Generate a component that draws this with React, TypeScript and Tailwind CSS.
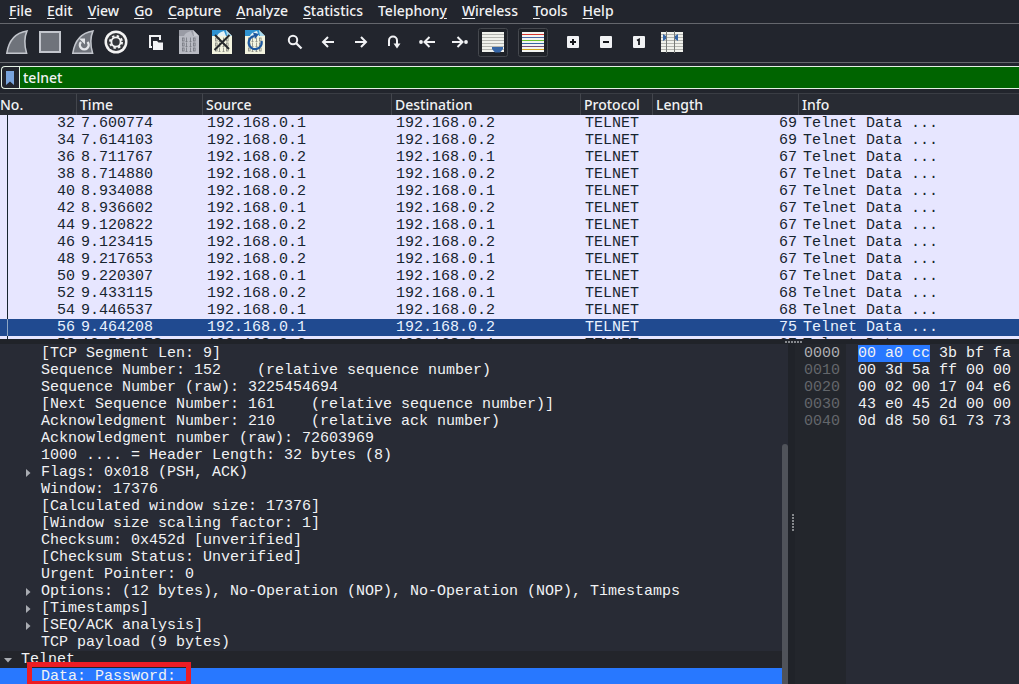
import type { ReactNode } from "react";

const menus: [string, string, string][] = [
  ["", "F", "ile"],
  ["", "E", "dit"],
  ["", "V", "iew"],
  ["", "G", "o"],
  ["", "C", "apture"],
  ["", "A", "nalyze"],
  ["", "S", "tatistics"],
  ["Telephon", "y", ""],
  ["", "W", "ireless"],
  ["", "T", "ools"],
  ["", "H", "elp"],
];

type Packet = [number, string, string, string, number];
const A = "192.168.0.1";
const B = "192.168.0.2";
const packets: Packet[] = [
  [32, "7.600774", A, B, 69],
  [34, "7.614103", A, B, 69],
  [36, "8.711767", B, A, 67],
  [38, "8.714880", A, B, 67],
  [40, "8.934088", B, A, 67],
  [42, "8.936602", A, B, 67],
  [44, "9.120822", B, A, 67],
  [46, "9.123415", A, B, 67],
  [48, "9.217653", B, A, 67],
  [50, "9.220307", A, B, 67],
  [52, "9.433115", B, A, 68],
  [54, "9.446537", A, B, 68],
  [56, "9.464208", A, B, 75],
  [58, "10.784878", B, A, 67],
];

type Detail = { text: string; expandable?: boolean };
const details: Detail[] = [
  { text: "[TCP Segment Len: 9]" },
  { text: "Sequence Number: 152    (relative sequence number)" },
  { text: "Sequence Number (raw): 3225454694" },
  { text: "[Next Sequence Number: 161    (relative sequence number)]" },
  { text: "Acknowledgment Number: 210    (relative ack number)" },
  { text: "Acknowledgment number (raw): 72603969" },
  { text: "1000 .... = Header Length: 32 bytes (8)" },
  { text: "Flags: 0x018 (PSH, ACK)", expandable: true },
  { text: "Window: 17376" },
  { text: "[Calculated window size: 17376]" },
  { text: "[Window size scaling factor: 1]" },
  { text: "Checksum: 0x452d [unverified]" },
  { text: "[Checksum Status: Unverified]" },
  { text: "Urgent Pointer: 0" },
  { text: "Options: (12 bytes), No-Operation (NOP), No-Operation (NOP), Timestamps", expandable: true },
  { text: "[Timestamps]", expandable: true },
  { text: "[SEQ/ACK analysis]", expandable: true },
  { text: "TCP payload (9 bytes)" },
];

const hexRows: [string, string, string][] = [
  ["0000", "00 a0 cc", " 3b bf fa"],
  ["0010", "", "00 3d 5a ff 00 00"],
  ["0020", "", "00 02 00 17 04 e6"],
  ["0030", "", "43 e0 45 2d 00 00"],
  ["0040", "", "0d d8 50 61 73 73"],
];

function Tool({ label, framed, children }: { label: string; framed?: boolean; children: ReactNode }) {
  return (
    <button type="button" aria-label={label} title={label} className="h-[33px] w-[33px] shrink-0">
      <svg viewBox="0 0 33 33" className="block h-[33px] w-[33px]" fill="none">
        {framed && <rect x="2.5" y="2.5" width="29" height="28" rx="2" fill="#1f2228" stroke="#45484e" />}
        {children}
      </svg>
    </button>
  );
}

function Fin() {
  return (
    <path d="M6.8 27.2C8.5 15.5 15 6.8 27 4.9C24.6 10.5 24.3 19.5 26.6 27.2Z" fill="#6f737b" stroke="#c3c6cd" strokeWidth="1.5" />
  );
}

function Digits({ color }: { color: string }) {
  return (
    <g stroke={color} strokeWidth="0.8">
      {[13.5, 18.5, 23.5].map((y) => (
        <g key={y}>
          <rect x="10.5" y={y - 1.5} width="1.6" height="3" />
          <path d={`M14.5 ${y - 2}v4M18.5 ${y - 2}v4M13.5 ${y + 2}h2M17.5 ${y + 2}h2`} />
          <rect x="21.5" y={y - 1.5} width="1.6" height="3" />
        </g>
      ))}
    </g>
  );
}

function Sheet({ gray }: { gray?: boolean }) {
  return (
    <>
      <path d="M7 4H21L27 10V28H7Z" fill={gray ? "#b9bbc3" : "#f3f4df"} />
      <path d="M7 4H21L23 10H7Z" fill={gray ? "#9a9ca5" : "#2f92d0"} />
      <path d="M12 10C13 7 16 6 19 5L21 10Z" fill={gray ? "#b9bbc3" : "#e4f2f5"} />
      <path d="M21 4L27 10H22Z" fill={gray ? "#c8cad0" : "#a7d8ee"} />
      <Digits color={gray ? "#74777f" : "#83857d"} />
    </>
  );
}

function Lines() {
  return (
    <>
      <rect x="6" y="6" width="22" height="20" fill="#f0f1ec" />
      <path d="M6 8.5h22M6 11.5h22M6 14.5h22M6 17.5h22M6 20.5h22M6 23.5h22" stroke="#b4b5b0" />
    </>
  );
}

function Toolbar() {
  const s = { stroke: "#f1f2f4", strokeWidth: 2 };
  return (
    <div role="toolbar" aria-label="Main toolbar" className="flex gap-[7px] border-b border-[#65676d] pt-0.5 pb-[3px]">
      <div className="flex">
        <Tool label="Start capturing packets"><Fin /></Tool>
        <Tool label="Stop capturing packets">
          <rect x="7" y="6" width="20" height="20" fill="#6f737b" stroke="#c3c6cd" strokeWidth="2" />
        </Tool>
        <Tool label="Restart current capture">
          <Fin />
          <path d="M15 16A4.400 4.400 0 1 0 21.500 16" stroke="#e4e6ea" strokeWidth="2.400" />
          <path d="M13 12.500H19V18.500Z" fill="#e4e6ea" />
        </Tool>
        <Tool label="Capture options">
          <circle cx="17" cy="16" r="11.500" fill="#f3f3f3" />
          <circle cx="17" cy="16" r="9" fill="#34363a" />
          <circle cx="17" cy="16" r="6" stroke="#f3f3f3" strokeWidth="2" strokeDasharray="2.356 2.356" />
          <circle cx="17" cy="16" r="4.600" stroke="#f3f3f3" strokeWidth="1.800" />
        </Tool>
      </div>
      <div className="flex">
        <Tool label="Open a capture file">
          <path d="M13 21H11V10H21V14" {...s} />
          <path d="M14 15H18L19.500 16.500H24V24H14Z" fill="#f1f2f4" />
        </Tool>
        <Tool label="Save this capture file"><Sheet gray /></Tool>
        <Tool label="Close this capture file">
          <Sheet />
          <path d="M10 9L24 23M24.500 9L9.500 24" stroke="#25282b" strokeWidth="2" />
        </Tool>
        <Tool label="Reload this file">
          <Sheet />
          <path d="M16 10.200A6.500 6.500 0 1 0 23.500 15" stroke="#1c579f" strokeWidth="2.200" />
          <path d="M15 6.500L21 8L17 13Z" fill="#1c579f" />
        </Tool>
      </div>
      <div className="flex">
        <Tool label="Find a packet">
          <circle cx="15" cy="14" r="4.200" {...s} />
          <path d="M18 17L23.500 22.500" stroke="#f1f2f4" strokeWidth="2.300" />
        </Tool>
        <Tool label="Previous packet"><path d="M17 11L12 16L17 21M12 16H23" {...s} /></Tool>
        <Tool label="Next packet"><path d="M17 11L22 16L17 21M22 16H11" {...s} /></Tool>
        <Tool label="Go to packet">
          <path d="M12 20V14.500A4 4 0 0 1 20 14.500V19" {...s} />
          <path d="M16.500 17.500H23.500L20 22.500Z" fill="#f1f2f4" />
        </Tool>
        <Tool label="First packet">
          <path d="M19.500 11L14.500 16L19.500 21M14.500 16H25" {...s} />
          <circle cx="11" cy="16" r="1.900" fill="#f1f2f4" />
        </Tool>
        <Tool label="Last packet">
          <path d="M14.500 11L19.500 16L14.500 21M19.500 16H9" {...s} />
          <circle cx="23" cy="16" r="1.900" fill="#f1f2f4" />
        </Tool>
        <Tool label="Auto scroll" framed>
          <Lines />
          <path d="M16 21H27V23L24 26.500H19L16 23Z" fill="#3565a6" />
        </Tool>
      </div>
      <div className="flex">
        <Tool label="Colorize packet list" framed>
          <rect x="6" y="6" width="22" height="20" fill="#f3f4f2" />
          <path d="M6 8.500h22" stroke="#d8362f" />
          <path d="M6 11.500h22" stroke="#4b66a5" />
          <path d="M6 14.500h22" stroke="#6cc32d" />
          <path d="M6 17.500h22" stroke="#3465a4" />
          <path d="M6 20.500h22" stroke="#75507b" />
          <path d="M6 23.500h22" stroke="#d2a41c" />
        </Tool>
      </div>
      <div className="flex">
        <Tool label="Zoom in">
          <rect x="11" y="10" width="12" height="12" rx="1" fill="#f1f2f4" />
          <path d="M14 16H20M17 13V19" stroke="#16181c" strokeWidth="2" />
        </Tool>
        <Tool label="Zoom out">
          <rect x="11" y="10" width="12" height="12" rx="1" fill="#f1f2f4" />
          <path d="M14 16H20" stroke="#16181c" strokeWidth="2" />
        </Tool>
        <Tool label="Normal size">
          <rect x="11" y="10" width="12" height="12" rx="1" fill="#f1f2f4" />
          <path d="M15 14.500L17 13.500V19" stroke="#16181c" strokeWidth="1.800" />
        </Tool>
        <Tool label="Resize columns">
          <Lines />
          <path d="M11.500 5V27M19.500 5V27" stroke="#777a78" />
          <path d="M8 8L11 10V13L8 15ZM23 8L20 10V13L23 15Z" fill="#3565a6" />
        </Tool>
      </div>
    </div>
  );
}

function PacketList() {
  const th = "h-[22px] border-l border-[#43464d] p-0 pl-[3px] text-left font-medium first:border-l-0 first:pl-0";
  return (
    <div className="h-[246px] shrink-0 overflow-hidden bg-[#e7e6ff]">
      <table className="w-full table-fixed border-separate border-spacing-0">
        <colgroup>
          <col className="w-[76px]" />
          <col className="w-[126px]" />
          <col className="w-[189px]" />
          <col className="w-[189px]" />
          <col className="w-[72px]" />
          <col className="w-[146px]" />
          <col />
        </colgroup>
        <thead className="bg-[#282b33] text-sm leading-[21px] text-[#f1f2f4]">
          <tr>
            {["No.", "Time", "Source", "Destination", "Protocol", "Length", "Info"].map((h) => (
              <th key={h} scope="col" className={`${th} border-t border-t-[#3a3d44]`}>{h}</th>
            ))}
          </tr>
        </thead>
        <tbody className="font-['Liberation_Mono',monospace] text-[15px] leading-[17px] whitespace-pre text-[#17242f]">
          {packets.map(([no, time, src, dst, len]) => (
            <tr key={no} className={no === 56 ? "bg-[#204a90] text-[#e9f2ff]" : ""}>
              <td className="p-0">
                <div className={`ml-[7px] h-[17px] border-l pr-px text-right ${no === 56 ? "border-[#8fa6c4]" : "border-[#17242f]"}`}>{no}</div>
              </td>
              <td className="p-0 pl-[5px]">{time}</td>
              <td className="p-0 pl-[5px]">{src}</td>
              <td className="p-0 pl-[5px]">{dst}</td>
              <td className="p-0 pl-[5px]">TELNET</td>
              <td className="p-0 pr-px text-right">{len}</td>
              <td className="p-0 pl-[5px]">Telnet Data ...</td>
            </tr>
          ))}
        </tbody>
      </table>
    </div>
  );
}

function Grip({ vertical }: { vertical?: boolean }) {
  return (
    <div className={vertical ? "flex flex-col gap-px" : "flex gap-px"}>
      {[0, 1, 2, 3, 4, 5].map((i) => (
        <span key={i} className="h-0.5 w-0.5 bg-[#85888c]" />
      ))}
    </div>
  );
}

function Arrow({ open }: { open?: boolean }) {
  return (
    <svg viewBox="0 0 8 8" className="h-2 w-2 shrink-0" fill="#a9acb2">
      <path d={open ? "M0 2H8L4 6.500Z" : "M2 0L6.500 4L2 8Z"} />
    </svg>
  );
}

function Details() {
  return (
    <section aria-label="Packet details" className="flex min-w-0 flex-1 overflow-hidden">
      <ul role="tree" className="min-w-0 flex-1 pt-px">
        {details.map((d) => (
          <li key={d.text} role="treeitem" className="flex h-[17px] items-center whitespace-pre">
            <span className="flex w-[41px] shrink-0 justify-end pr-[9px]">{d.expandable && <Arrow />}</span>
            {d.text}
          </li>
        ))}
        <li role="treeitem" aria-expanded="true" className="flex h-[17px] items-center bg-[#23252b]">
          <span className="w-[21px] shrink-0 pl-1"><Arrow open /></span>
          Telnet
        </li>
        <li role="treeitem" aria-selected="true" className="relative flex h-[17px] items-center bg-[#2878ff] pl-[41px]">
          Data: Password:
          <span className="absolute -top-1.5 left-[27px] h-6 w-[164px] border-5 border-[#ec1c24]" />
        </li>
      </ul>
      <div className="w-1.5 pt-[100px]">
        <div className="h-full rounded-t-full bg-[#50535a]" />
      </div>
    </section>
  );
}

export default function App() {
  return (
    <div className="flex h-screen flex-col overflow-hidden bg-[#22252d] font-['Noto_Sans',sans-serif] text-[#f1f2f4]">
      <nav aria-label="Menu" className="flex h-6 shrink-0 items-start gap-[15px] border-b border-[#65676d] pt-px pl-[9px] text-sm font-medium">
        {menus.map(([pre, key, post]) => (
          <button key={pre + key + post} type="button" className="leading-5">
            {pre}
            <span className="underline decoration-1 underline-offset-2">{key}</span>
            {post}
          </button>
        ))}
      </nav>

      <Toolbar />

      <form className="mt-[3px] mb-1 ml-px flex h-[23px] shrink-0 rounded-l-sm border border-r-0 border-[#e4f0e4]" onSubmit={(e) => e.preventDefault()}>
        <button type="button" aria-label="Filter bookmarks" className="flex w-[18px] items-center justify-center border-r border-[#e4f0e4] pr-0.5">
          <svg viewBox="0 0 8 14" className="h-3.5 w-2" fill="#79a4dd">
            <path d="M0 0H8V14L4 10.500L0 14Z" />
          </svg>
        </button>
        <input
          type="text"
          aria-label="Display filter"
          defaultValue="telnet"
          className="min-w-0 flex-1 bg-[#006400] pl-[3px] text-sm font-medium outline-none"
        />
      </form>

      <PacketList />

      <div className="flex h-[5px] shrink-0 items-center bg-[#202329] pl-[785px]">
        <Grip />
      </div>

      <div className="flex min-h-0 flex-1 bg-[#282b35] font-['Liberation_Mono',monospace] text-[15px] leading-[17px]">
        <Details />
        <div className="flex w-[7px] shrink-0 items-center justify-end bg-[#202329] pt-4 pr-px">
          <Grip vertical />
        </div>
        <section aria-label="Packet bytes" className="flex w-[224px] shrink-0 whitespace-pre">
          <div className="w-[51px] bg-[#23262c] pt-px pl-[9px] text-[#63666b]">
            {hexRows.map(([off], i) => (
              <div key={off} className={i === 0 ? "text-[#aeb0b3]" : ""}>{off}</div>
            ))}
          </div>
          <div className="flex-1 pt-px pl-3">
            {hexRows.map(([off, marked, rest]) => (
              <div key={off} className="flex">
                {marked && <span className="bg-[#2878ff]">{marked}</span>}
                <span>{rest}</span>
              </div>
            ))}
          </div>
        </section>
      </div>
    </div>
  );
}
